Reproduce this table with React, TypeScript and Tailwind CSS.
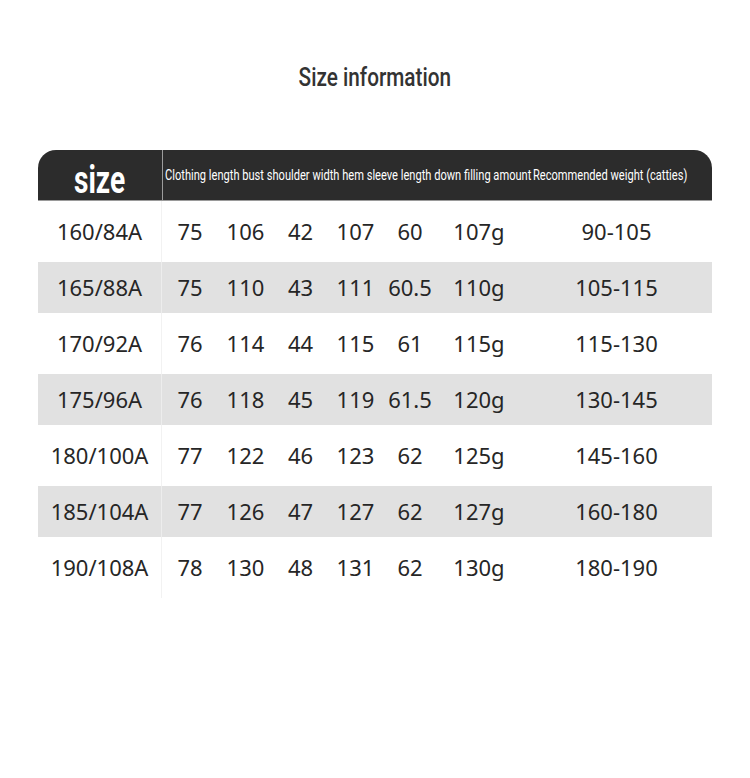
import React from "react";

const rows = [
  ["160/84A", "75", "106", "42", "107", "60", "107g", "90-105"],
  ["165/88A", "75", "110", "43", "111", "60.5", "110g", "105-115"],
  ["170/92A", "76", "114", "44", "115", "61", "115g", "115-130"],
  ["175/96A", "76", "118", "45", "119", "61.5", "120g", "130-145"],
  ["180/100A", "77", "122", "46", "123", "62", "125g", "145-160"],
  ["185/104A", "77", "126", "47", "127", "62", "127g", "160-180"],
  ["190/108A", "78", "130", "48", "131", "62", "130g", "180-190"],
];

const widths = ["w-[56px]", "w-[55px]", "w-[55px]", "w-[55px]", "w-[54px]", "w-[84px]", "w-[191px]"];

export default function App() {
  return (
    <div className="w-[750px] h-[778px] bg-white flex flex-col" style={{ fontFamily: "'Noto Sans', sans-serif" }}>
      <div className="mt-[63px] h-[30px] flex justify-center">
        <span
          className="inline-block whitespace-nowrap text-[25px] leading-[30px] font-medium text-[#333] scale-x-[0.83]"
          style={{ fontFamily: "Roboto, sans-serif" }}
        >
          Size information
        </span>
      </div>
      <div className="mt-[57px] mx-[38px] w-[674px] flex flex-col">
        <div
          className="h-[51px] bg-[#2c2c2c] rounded-t-[18px] flex border-b border-[#9a9a9a] text-white"
          style={{ fontFamily: "Roboto, sans-serif" }}
        >
          <div className="w-[124px] flex justify-center pt-[11px]">
            <span className="inline-block text-[38px] leading-[38px] font-bold scale-x-[0.74]">size</span>
          </div>
          <div className="w-px bg-[#9c9c9c]" />
          <div className="flex items-center pl-[2px]">
            <div className="w-[368px] whitespace-nowrap">
              <span className="inline-block origin-left text-[15px] leading-[20px] scale-x-[0.74]">
                Clothing length bust shoulder width hem sleeve length down filling amount
              </span>
            </div>
            <div className="w-[170px] whitespace-nowrap">
              <span className="inline-block origin-left text-[15px] leading-[20px] scale-x-[0.74]">
                Recommended weight (catties)
              </span>
            </div>
          </div>
        </div>
        {rows.map((r, i) => {
          const gray = i % 2 === 1;
          return (
            <div
              key={i}
              className={gray ? "h-[51px] bg-[#e1e1e1] flex items-center text-[22px] text-[#262626]" : "h-[61px] bg-white flex items-center text-[22px] text-[#262626]"}
            >
              <div className={gray ? "w-[124px] h-full flex items-center justify-center border-r border-[#ededed]" : "w-[124px] h-full flex items-center justify-center border-r border-[#f2f2f2]"}>
                {r[0]}
              </div>
              {r.slice(1).map((c, j) => (
                <div key={j} className={widths[j] + " flex justify-center whitespace-nowrap"}>
                  {c}
                </div>
              ))}
            </div>
          );
        })}
      </div>
    </div>
  );
}
